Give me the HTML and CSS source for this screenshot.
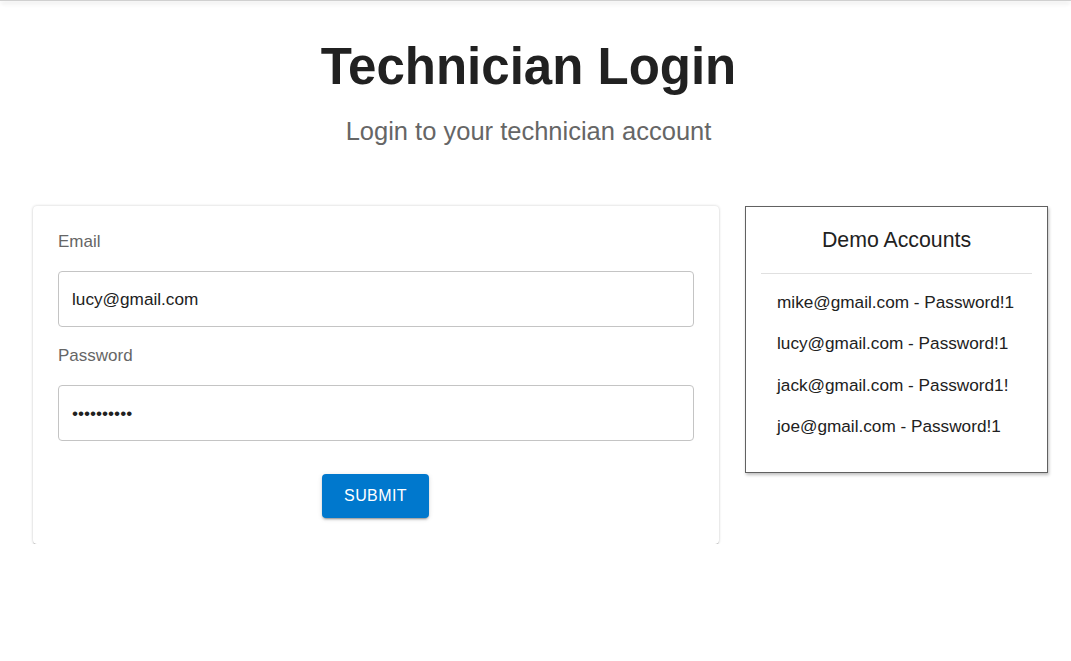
FILE: index.html
```html
<!DOCTYPE html>
<html lang="en">
<head>
<meta charset="utf-8">
<title>Technician Login</title>
<link rel="stylesheet" href="styles.css">
</head>
<body>
<div class="topbar"></div>
<main class="page">
  <header class="hero">
    <h1 class="title">Technician Login</h1>
    <p class="subtitle">Login to your technician account</p>
  </header>
  <section class="content">
    <form class="card">
      <label class="field-label" for="email">Email</label>
      <input class="field-input" id="email" type="text" value="lucy@gmail.com">
      <label class="field-label second" for="password">Password</label>
      <input class="field-input" id="password" type="password" value="Password!1">
      <div class="actions">
        <button class="submit" type="button">SUBMIT</button>
      </div>
    </form>
    <aside class="demo">
      <h2 class="demo-title">Demo Accounts</h2>
      <hr class="demo-rule">
      <ul class="demo-list">
        <li class="demo-item">mike@gmail.com - Password!1</li>
        <li class="demo-item">lucy@gmail.com - Password!1</li>
        <li class="demo-item">jack@gmail.com - Password1!</li>
        <li class="demo-item">joe@gmail.com - Password!1</li>
      </ul>
    </aside>
  </section>
</main>
</body>
</html>
```
FILE: styles.css
```css
* { box-sizing: border-box; }
html, body {
  margin: 0;
  padding: 0;
  background: #fff;
  font-family: "Liberation Sans", Arial, sans-serif;
  color: #212121;
}
.topbar {
  height: 1px;
  background: #d0d0d0;
  box-shadow: 0 2px 4px rgba(0,0,0,0.2), 0 4px 8px rgba(0,0,0,0.06);
  position: relative;
  z-index: 2;
}
.page {
  display: flex;
  flex-direction: column;
}
.hero {
  text-align: center;
  padding: 36px 14px 0 0;
}
.title {
  margin: 0;
  font-size: 51px;
  line-height: 60px;
  font-weight: 700;
  color: #212121;
}
.subtitle {
  margin: 19px 0 0;
  font-size: 25.5px;
  line-height: 30px;
  color: #666;
}
.content {
  display: flex;
  align-items: flex-start;
  gap: 26px;
  padding: 60px 23px 0 33px;
}
.card {
  flex: 0 0 686px;
  display: flex;
  flex-direction: column;
  padding: 26px 25px 26px;
  border-radius: 4px;
  background: #fff;
  box-shadow: 0 0 3px rgba(0,0,0,0.2), 0 1px 1px rgba(0,0,0,0.14), 0 2px 1px -1px rgba(0,0,0,0.22);
}
.field-label {
  font-size: 17px;
  line-height: 20px;
  color: #666;
  margin-bottom: 19px;
}
.field-label.second {
  margin-top: 19px;
  margin-bottom: 19px;
}
.field-input {
  height: 56px;
  width: 100%;
  border: 1px solid #c4c4c4;
  border-radius: 4px;
  padding: 0 13px;
  font-family: "Liberation Sans", Arial, sans-serif;
  font-size: 17.2px;
  color: #212121;
  background: #fff;
  outline: none;
}
.actions {
  display: flex;
  justify-content: center;
  margin-top: 33px;
  padding-right: 1px;
}
.submit {
  width: 107px;
  height: 44px;
  border: none;
  border-radius: 4px;
  background: #0078cd;
  color: #fff;
  font-family: "Liberation Sans", Arial, sans-serif;
  font-size: 16px;
  letter-spacing: 0.4px;
  box-shadow: 0 3px 1px -2px rgba(0,0,0,0.2), 0 2px 2px 0 rgba(0,0,0,0.14), 0 1px 5px 0 rgba(0,0,0,0.12);
  padding: 0;
}
.demo {
  flex: 0 0 303px;
  border: 1px solid #616161;
  background: #fff;
  box-shadow: 1px 2px 3px rgba(0,0,0,0.25);
  padding: 0 15px 17px;
}
.demo-title {
  margin: 0;
  padding-top: 20px;
  text-align: center;
  font-size: 21.3px;
  line-height: 26px;
  font-weight: 400;
  color: #212121;
}
.demo-rule {
  margin: 20px 0 0;
  border: none;
  border-top: 1px solid #e0e0e0;
  height: 0;
}
.demo-list {
  list-style: none;
  margin: 0;
  padding: 8px 0 8px;
}
.demo-item {
  font-size: 17.2px;
  line-height: 21.3px;
  padding: 10px 16px;
  color: #212121;
  white-space: nowrap;
}
```
